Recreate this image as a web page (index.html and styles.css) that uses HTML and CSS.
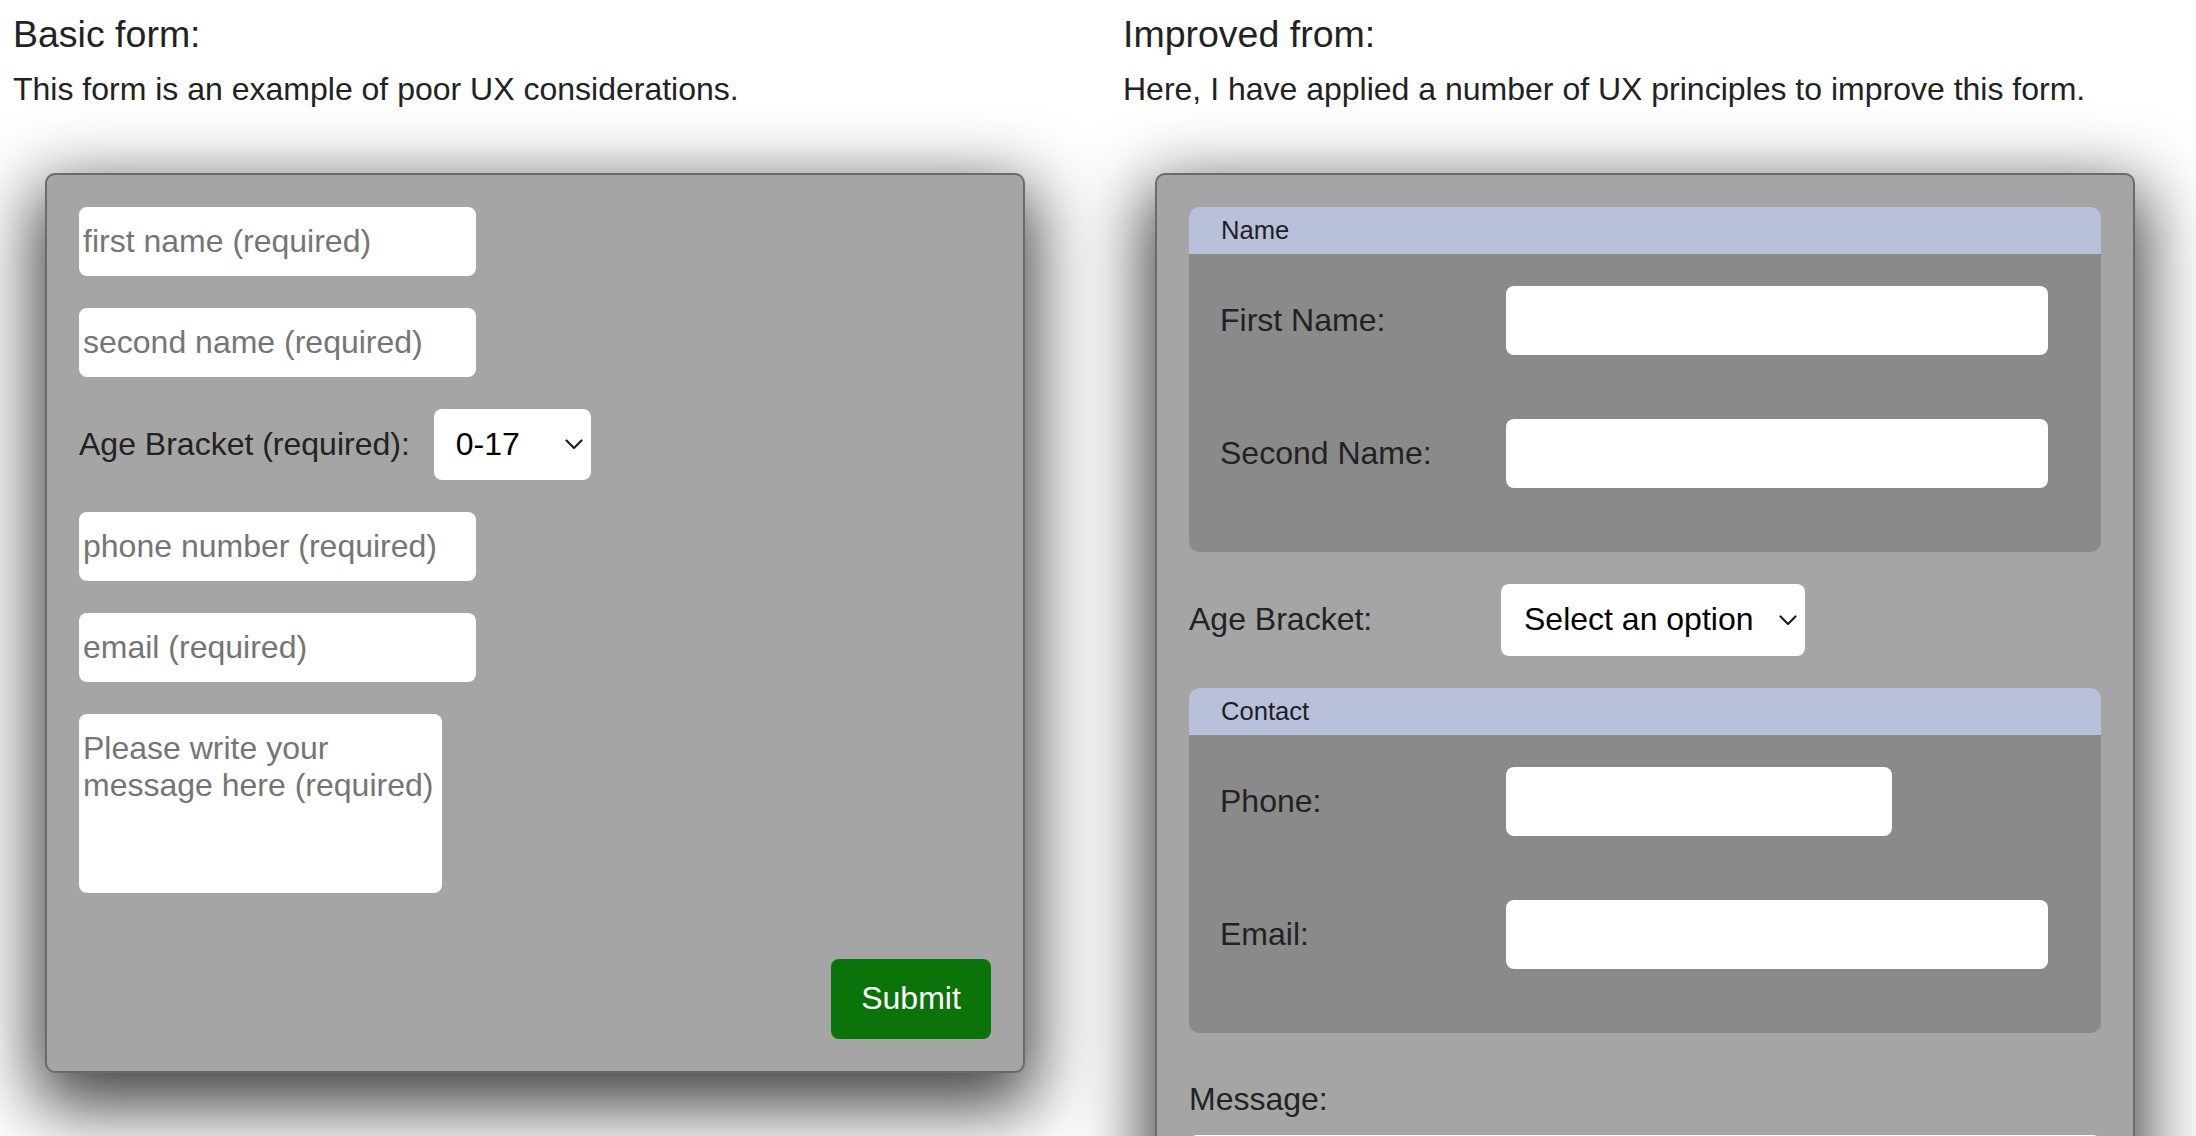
FILE: index.html
```html
<!DOCTYPE html>
<html lang="en">
<head>
<meta charset="utf-8">
<title>Forms</title>
<link rel="stylesheet" href="styles.css">
</head>
<body>
<div class="page">
  <section class="col col-basic">
    <h3 class="title">Basic form:</h3>
    <p class="intro">This form is an example of poor UX considerations.</p>
    <form class="card basic">
      <input class="field basic-field" type="text" placeholder="first name (required)">
      <input class="field basic-field" type="text" placeholder="second name (required)">
      <div class="age-basic">
        <label class="label">Age Bracket (required):</label>
        <div class="select-wrap">
          <select class="select select-small"><option>0-17</option><option>18-30</option></select>
          <svg class="chev" width="18" height="11" viewBox="0 0 18 11"><polyline points="1.5,1.5 9,9 16.5,1.5" fill="none" stroke="#1f1f1f" stroke-width="2.2" stroke-linecap="round" stroke-linejoin="round"/></svg>
        </div>
      </div>
      <input class="field basic-field" type="text" placeholder="phone number (required)">
      <input class="field basic-field" type="text" placeholder="email (required)">
      <textarea class="field basic-area" placeholder="Please write your message here (required)"></textarea>
      <button class="submit" type="button">Submit</button>
    </form>
  </section>
  <section class="col col-improved">
    <h3 class="title">Improved from:</h3>
    <p class="intro">Here, I have applied a number of UX principles to improve this form.</p>
    <form class="card improved">
      <div class="group">
        <div class="group-head">Name</div>
        <div class="group-body">
          <div class="row"><label class="label">First Name:</label><input class="field wide" type="text"></div>
          <div class="row"><label class="label">Second Name:</label><input class="field wide" type="text"></div>
        </div>
      </div>
      <div class="age-row">
        <label class="label">Age Bracket:</label>
        <div class="select-wrap">
          <select class="select select-wide"><option>Select an option</option><option>0-17</option></select>
          <svg class="chev" width="18" height="11" viewBox="0 0 18 11"><polyline points="1.5,1.5 9,9 16.5,1.5" fill="none" stroke="#1f1f1f" stroke-width="2.2" stroke-linecap="round" stroke-linejoin="round"/></svg>
        </div>
      </div>
      <div class="group">
        <div class="group-head">Contact</div>
        <div class="group-body">
          <div class="row"><label class="label">Phone:</label><input class="field phone" type="tel"></div>
          <div class="row"><label class="label">Email:</label><input class="field wide" type="email"></div>
        </div>
      </div>
      <div class="message">
        <label class="label">Message:</label>
        <textarea class="field message-area"></textarea>
      </div>
      <button class="submit" type="button">Submit</button>
    </form>
  </section>
</div>
</body>
</html>
```

FILE: styles.css
```css
html {
  scrollbar-width: none;
}
body {
  margin: 0;
  background: #ffffff;
  color: #222222;
  font-family: "Liberation Sans", Arial, sans-serif;
  font-size: 32px;
}
.page {
  display: grid;
  grid-template-columns: 1110px 1fr;
  padding: 13px 0 0 13px;
}
.col {
  min-width: 0;
}
.title {
  margin: 0;
  font-size: 37.5px;
  font-weight: 400;
  line-height: 43px;
  color: #222222;
}
.intro {
  margin: 15px 0 0;
  font-size: 32px;
  line-height: 36.8px;
}
.card {
  box-sizing: border-box;
  width: 980px;
  margin: 65px 0 0 32px;
  padding: 32px;
  background: #a5a5a5;
  border: 2px solid #6b6b6b;
  border-radius: 10px;
  box-shadow: 0 24px 70px 10px rgba(0, 0, 0, 0.75);
}
.basic {
  display: flex;
  flex-direction: column;
  align-items: flex-start;
  gap: 32px;
}
.field {
  box-sizing: border-box;
  border: 0;
  border-radius: 8px;
  background: #ffffff;
  padding: 16px 4px;
  font-family: "Liberation Sans", Arial, sans-serif;
  font-size: 32px;
  line-height: 36.8px;
  height: 69px;
  color: #000;
  outline: none;
}
.field::placeholder {
  color: #757575;
}
.basic-field {
  width: 397px;
}
.basic-area {
  width: 363px;
  height: 179px;
  resize: none;
  display: block;
  margin: 0;
}
.label {
  font-size: 32px;
  line-height: 36.8px;
  color: #222222;
}
.age-basic {
  display: flex;
  align-items: center;
  gap: 24px;
}
.select-wrap {
  position: relative;
  display: inline-flex;
  justify-self: start;
}
.select {
  appearance: none;
  -webkit-appearance: none;
  box-sizing: border-box;
  border: 0;
  border-radius: 8px;
  background: #ffffff;
  color: #000000;
  font-family: "Liberation Sans", Arial, sans-serif;
  font-size: 32px;
  line-height: 36.8px;
  padding: 0 0 0 22px;
  margin: 0;
  outline: none;
}
.select-small {
  width: 157px;
  height: 71px;
}
.select-wide {
  width: 304px;
  height: 72px;
  padding-left: 23px;
}
.chev {
  position: absolute;
  right: 8px;
  top: 50%;
  margin-top: -5px;
  pointer-events: none;
}
.submit {
  align-self: flex-end;
  margin-top: 34px;
  width: 160px;
  height: 80px;
  border: 0;
  border-radius: 8px;
  background: #0a740a;
  color: #ffffff;
  font-family: "Liberation Sans", Arial, sans-serif;
  font-size: 32px;
  padding: 0;
}
.improved {
  display: flex;
  flex-direction: column;
  gap: 32px;
}
.group {
  border-radius: 10px;
  overflow: hidden;
  background: #8a8a8a;
}
.group-head {
  background: #b9c1da;
  font-size: 25.6px;
  line-height: 29px;
  padding: 9px 32px;
  color: #1e1e24;
}
.group-body {
  display: flex;
  flex-direction: column;
  gap: 64px;
  padding: 32px 32px 64px 31px;
}
.row {
  display: grid;
  grid-template-columns: 286px 1fr;
  align-items: center;
}
.wide {
  width: 542px;
}
.phone {
  width: 386px;
}
.age-row {
  display: grid;
  grid-template-columns: 312px 1fr;
  align-items: center;
}
.message {
  display: flex;
  flex-direction: column;
  align-items: flex-start;
  gap: 17px;
  margin-top: 16px;
}
.message-area {
  width: 100%;
  height: 179px;
  resize: none;
  display: block;
  margin: 0;
}
```
